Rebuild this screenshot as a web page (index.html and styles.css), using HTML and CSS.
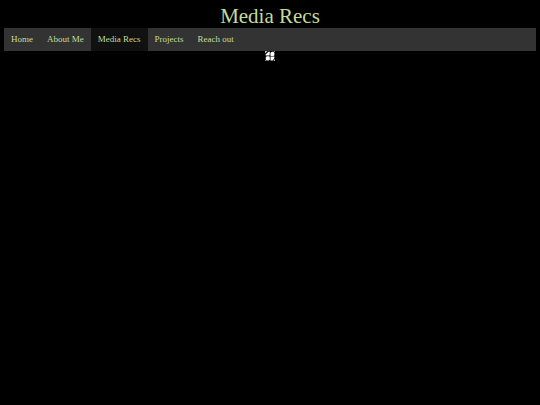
FILE: index.html
```html
<!DOCTYPE html>
<html lang="en">
<head>
  <meta charset="UTF-8">
  <title>Media Recs</title>
  <link rel="stylesheet" href="styles.css">
</head>
<body>
  <h1>Media Recs</h1>

  <nav>
    <ul>
      <li><a href="index.html">Home</a></li>
      <li><a href="about.html">About Me</a></li>
      <li><a class="active" href="media.html">Media Recs</a></li>
      <li><a href="projects.html">Projects</a></li>
      <li><a href="contact.html">Reach out</a></li>
    </ul>
  </nav>

  <main>
    <svg class="logo" viewBox="0 0 10 10" aria-hidden="true">
      <path d="M.6 4.6V3.6L3.4.8h1.5L4.5 4.6z" />
      <path d="M5.4 4.4V2L6.8.8h1.8L9.4 2v2.4L8 4.9H6z" />
      <path d="M.8 6l1-.8h2.4l.6.9v2.2L4 9.4H1.6L.8 8.4z" />
      <path d="M5.5 5.4h3.9V7L7.8 9.4H5.5z" />
      <path class="edge" d="M0 0h2.5L0 2.5zM8.8 0H10v1.2zM9 8.6h1V10H8.6zM0 8.8L1.2 10H0z" />
    </svg>
  </main>
</body>
</html>
```

FILE: styles.css
```css
body {
  margin: 4px;
  background-color: black;
  color: #c5db98;
  font-family: "Liberation Serif", "Times New Roman", serif;
}

h1 {
  margin: 0;
  font-size: 21px;
  font-weight: normal;
  line-height: 24px;
  text-align: center;
}

ul {
  display: flex;
  margin: 0;
  padding: 0;
  list-style-type: none;
  background-color: #333;
}

li a {
  display: block;
  padding: 6px 7px;
  color: #c5db98;
  font-size: 9px;
  line-height: 11px;
  text-decoration: none;
}

li a:hover,
.active {
  background-color: #111;
}

.logo {
  display: block;
  width: 10px;
  height: 10px;
  margin: 0 auto;
  fill: white;
}

.edge {
  fill: #bbb;
}
```
